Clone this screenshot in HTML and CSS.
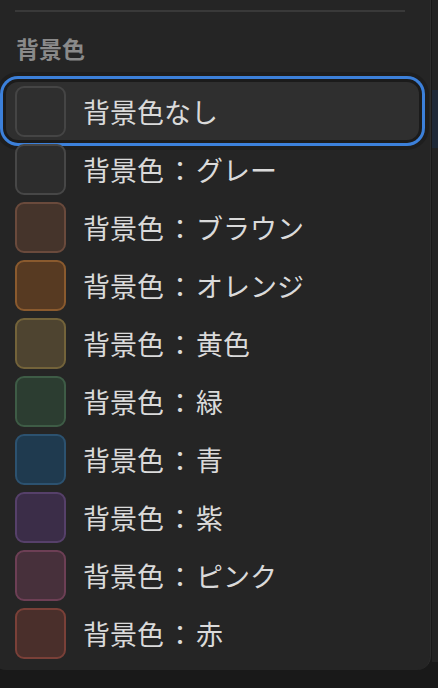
FILE: index.html
```html
<!DOCTYPE html>
<html lang="ja">
<head>
  <meta charset="UTF-8">
  <title>背景色</title>
  <link rel="stylesheet" href="styles.css">
</head>
<body>

  <div class="layout">
    <div class="menu">
      <div class="divider"></div>
      <div class="menu-title">背景色</div>

      <ul class="color-list">
        <li class="color-item selected"><span class="swatch none"></span>背景色なし</li>
        <li class="color-item"><span class="swatch gray"></span>背景色<span class="colon">：</span>グレー</li>
        <li class="color-item"><span class="swatch brown"></span>背景色<span class="colon">：</span>ブラウン</li>
        <li class="color-item"><span class="swatch orange"></span>背景色<span class="colon">：</span>オレンジ</li>
        <li class="color-item"><span class="swatch yellow"></span>背景色<span class="colon">：</span>黄色</li>
        <li class="color-item"><span class="swatch green"></span>背景色<span class="colon">：</span>緑</li>
        <li class="color-item"><span class="swatch blue"></span>背景色<span class="colon">：</span>青</li>
        <li class="color-item"><span class="swatch purple"></span>背景色<span class="colon">：</span>紫</li>
        <li class="color-item"><span class="swatch pink"></span>背景色<span class="colon">：</span>ピンク</li>
        <li class="color-item"><span class="swatch red"></span>背景色<span class="colon">：</span>赤</li>
      </ul>
    </div>

    <div class="side-strip">
      <div class="side-mark"></div>
    </div>
  </div>

</body>
</html>
```

FILE: styles.css
```css
html, body {
  margin: 0;
  padding: 0;
}
body {
  background-color: #191919;
  font-family: "Noto Sans CJK JP", "Noto Sans", sans-serif;
  overflow: hidden;
}
.layout {
  display: flex;
  align-items: flex-start;
}
.menu {
  width: 439px;
  margin-left: -8px;
  height: 670px;
  box-sizing: border-box;
  background-color: #252525;
  border-right: 1px solid #2e2e2e;
  border-radius: 0 0 14px 14px;
  overflow: hidden;
}
.divider {
  height: 2px;
  background-color: #393939;
  margin: 10px 25px 0 23px;
}
.menu-title {
  margin: 24px 0 0 24px;
  font-size: 23px;
  line-height: 24px;
  font-weight: bold;
  color: #8a8a8a;
}
.color-list {
  list-style: none;
  margin: 22px 0 0 0;
  padding: 0;
}
.color-item {
  display: flex;
  align-items: center;
  height: 58px;
  margin: 0 11px 0 14px;
  padding-left: 9px;
  border-radius: 12px;
  font-size: 27px;
  color: #dadada;
  white-space: pre;
}
.color-item.selected {
  background-color: #2f2f2f;
  box-shadow: 0 0 0 3px #1b1b1b, 0 0 0 6px #3c80da, 0 0 0 10px rgba(0, 0, 0, 0.18);
}
.colon {
  display: inline-block;
  width: 32px;
  text-align: center;
  font-family: "Noto Sans CJK TC", "Noto Sans CJK JP", sans-serif;
}
.swatch {
  width: 51px;
  height: 51px;
  box-sizing: border-box;
  border: 2px solid #454545;
  border-radius: 9px;
  margin-right: 17px;
  flex-shrink: 0;
}
.swatch.none   { background-color: #2f2f2f; border-color: #454545; }
.swatch.gray   { background-color: #2d2d2d; border-color: #474747; }
.swatch.brown  { background-color: #45342b; border-color: #6a4a3c; }
.swatch.orange { background-color: #573a22; border-color: #8a5a2e; }
.swatch.yellow { background-color: #4e4430; border-color: #73633a; }
.swatch.green  { background-color: #2c3d31; border-color: #3e5c46; }
.swatch.blue   { background-color: #1f3a4f; border-color: #2c5270; }
.swatch.purple { background-color: #3b2d48; border-color: #56406a; }
.swatch.pink   { background-color: #47303b; border-color: #6d3f55; }
.swatch.red    { background-color: #4a2f2b; border-color: #7a4038; }
.side-strip {
  flex: 1;
  height: 662px;
  margin-left: 1px;
  background-color: #232323;
  padding-top: 90px;
  box-sizing: border-box;
}
.side-mark {
  height: 58px;
  background-color: #1f2937;
}
```
